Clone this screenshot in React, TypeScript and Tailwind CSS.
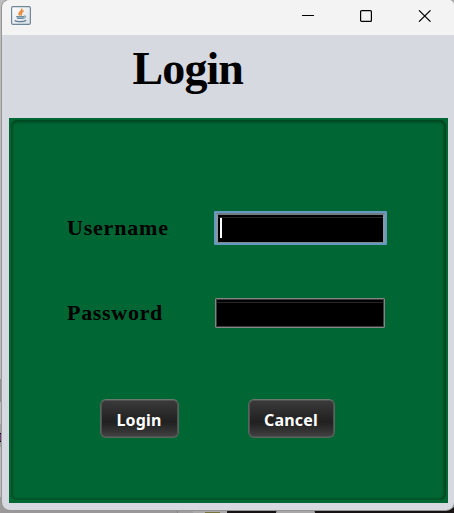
import React from "react";

function JavaIcon() {
  return (
    <svg width="20" height="19" viewBox="0 0 20 19" fill="none">
      <defs>
        <linearGradient id="frame" x1="0" y1="0" x2="1" y2="1">
          <stop offset="0" stopColor="#ffffff" />
          <stop offset="1" stopColor="#d9dee3" />
        </linearGradient>
      </defs>
      <rect x="0.6" y="0.6" width="18.8" height="17.8" rx="1.5" fill="url(#frame)" stroke="#6d8799" strokeWidth="1.2" />
      <path d="M10.8 3.3c.6 2.1-4.1 2.8-2.3 5.6M12 5.2c-2.3 1-1.9 1.8-1.7 3.6" stroke="#ed8b3c" strokeWidth="1.7" strokeLinecap="round" />
      <path d="M5 10h8.2l-1.2 3H6.4z" fill="#6b8ba2" />
      <path d="M13 10c2.6-.5 2.2 2.2-.9 2.2" stroke="#6b8ba2" strokeWidth="1" />
      <path d="M3.6 14.6c2 1.5 9.4 1.4 11.5-.4" stroke="#5c7d97" strokeWidth="1.3" />
      <path d="M6.6 11.4h5" stroke="#b9cad6" strokeWidth=".7" />
    </svg>
  );
}

function TitleBar() {
  return (
    <header className="flex h-[35px] items-start bg-[#f3f3f3] pl-[9px] pt-[6px]">
      <JavaIcon />
      <div className="ml-auto mr-[23px] mt-1 flex gap-[46px]">
        <svg width="12" height="12" viewBox="0 0 12 12">
          <path d="M0 5.5h12" stroke="#000" />
        </svg>
        <svg width="12" height="12" viewBox="0 0 12 12" fill="none">
          <rect x="0.6" y="0.6" width="10.8" height="10.8" rx="1" stroke="#000" strokeWidth="1.2" />
        </svg>
        <svg width="13" height="12" viewBox="0 0 13 12" fill="none">
          <path d="M1 .3l11.5 11.4M12.5 .3L1 11.7" stroke="#000" strokeWidth="1.15" />
        </svg>
      </div>
    </header>
  );
}

function Field({ label, spacing, focused = false }: { label: string; spacing: string; focused?: boolean }) {
  return (
    <div className="flex h-[34px] items-center">
      <span
        className={`${spacing} w-[147px] whitespace-nowrap font-['Liberation_Serif',serif] text-[22px] font-bold leading-[34px] text-black`}
      >
        {label}
      </span>
      <div className={focused ? "rounded-[1px] bg-[#6699bf] p-[2px]" : "ml-px p-0"}>
        <div
          className={
            focused
              ? "h-[30px] w-[169px] border-2 border-b-[1.5px] border-x-[#8598a3] border-b-[#7f8a90] border-t-[#6f7b82] bg-black"
              : "h-[30px] w-[170px] rounded-[1px] border border-[#858585] bg-black shadow-[inset_0_0_0_1px_#3c3c3c]"
          }
        >
          <div className={focused ? "mt-[2px] h-px bg-[#262626]" : "mx-px mt-[3px] h-px bg-[#262626]"} />
          {focused && <div className="ml-[2px] h-5 w-[2px] bg-white" />}
        </div>
      </div>
    </div>
  );
}

function Button({ label, width }: { label: string; width: string }) {
  return (
    <button
      className={`${width} flex h-[39px] items-center justify-center rounded-[6px] border border-[#59645e] border-t-[#6c7770] bg-linear-to-b from-[#3b3b3b] via-[#202020] via-60% to-[#424242] pr-px pt-[3px] font-['Noto_Sans',sans-serif] text-[16px] font-bold leading-none tracking-[0.2px] text-white shadow-[inset_0_0_0_1px_#505250]`}
    >
      {label}
    </button>
  );
}

export default function App() {
  return (
    <div className="relative h-[513px] w-[454px] overflow-hidden bg-[#bcbcbc]">
      <div className="absolute inset-x-0 bottom-0 flex h-4 items-end bg-[#171314]">
        <div className="h-4 w-[177px] bg-[#9b9899]" />
        <div className="h-4 w-4 border-l border-[#858384] bg-[#a09d9e]" />
        <div className="h-4 w-[12px] bg-[#aaa8a9]" />
        <div className="flex h-4 w-[15px] items-end bg-[#aaa8a9]">
          <div className="h-px w-full bg-[#77733c]" />
        </div>
        <div className="h-4 w-[7px] bg-[#aaa8a9]" />
        <div className="h-4 w-[49px] bg-[#171314]" />
        <div className="h-[3px] w-[39px] rounded-t-[3px] bg-[#aaa7a8]" />
        <div className="h-4 flex-1 bg-[#171314]" />
      </div>
      <div className="absolute left-0 top-[379px] h-[23px] w-[2px] bg-[#929292]" />
      <div className="absolute left-0 top-[424px] h-[23px] w-[2px] bg-[#a2a2a2]" />
      <div className="absolute left-0 top-[433px] h-[9px] w-[2px] border-y border-black bg-[#71417a]" />
      <main className="relative ml-[2px] h-[510px] overflow-hidden rounded-[8px] rounded-tr-[5px] bg-[#d6d9e0] shadow-[0_0_0_1px_#969696]">
        <TitleBar />
        <h1 className="h-[83px] pl-[130.5px] pt-[7px] font-['Liberation_Serif',serif] text-[46px] font-bold leading-[54px] tracking-[-0.9px] text-black">
          Login
        </h1>
        <section className="ml-[7px] h-[385px] w-[439px] bg-[#006633] p-[2px]">
          <div className="h-[380px] w-[435px] rounded-[6px] pl-[56px] pt-[91px] shadow-[inset_0_2px_3px_#004621,inset_2px_0_3px_#00562b,inset_-2px_0_3px_#00471f,inset_0_-1px_2px_#00552a]">
            <Field label="Username" spacing="tracking-[0.8px]" focused />
            <div className="h-[51px]" />
            <Field label="Password" spacing="tracking-[0.7px]" />
            <div className="ml-[33px] mt-[69px] flex gap-[69px]">
              <Button label="Login" width="w-[79px]" />
              <Button label="Cancel" width="w-[87px]" />
            </div>
          </div>
        </section>
      </main>
    </div>
  );
}
